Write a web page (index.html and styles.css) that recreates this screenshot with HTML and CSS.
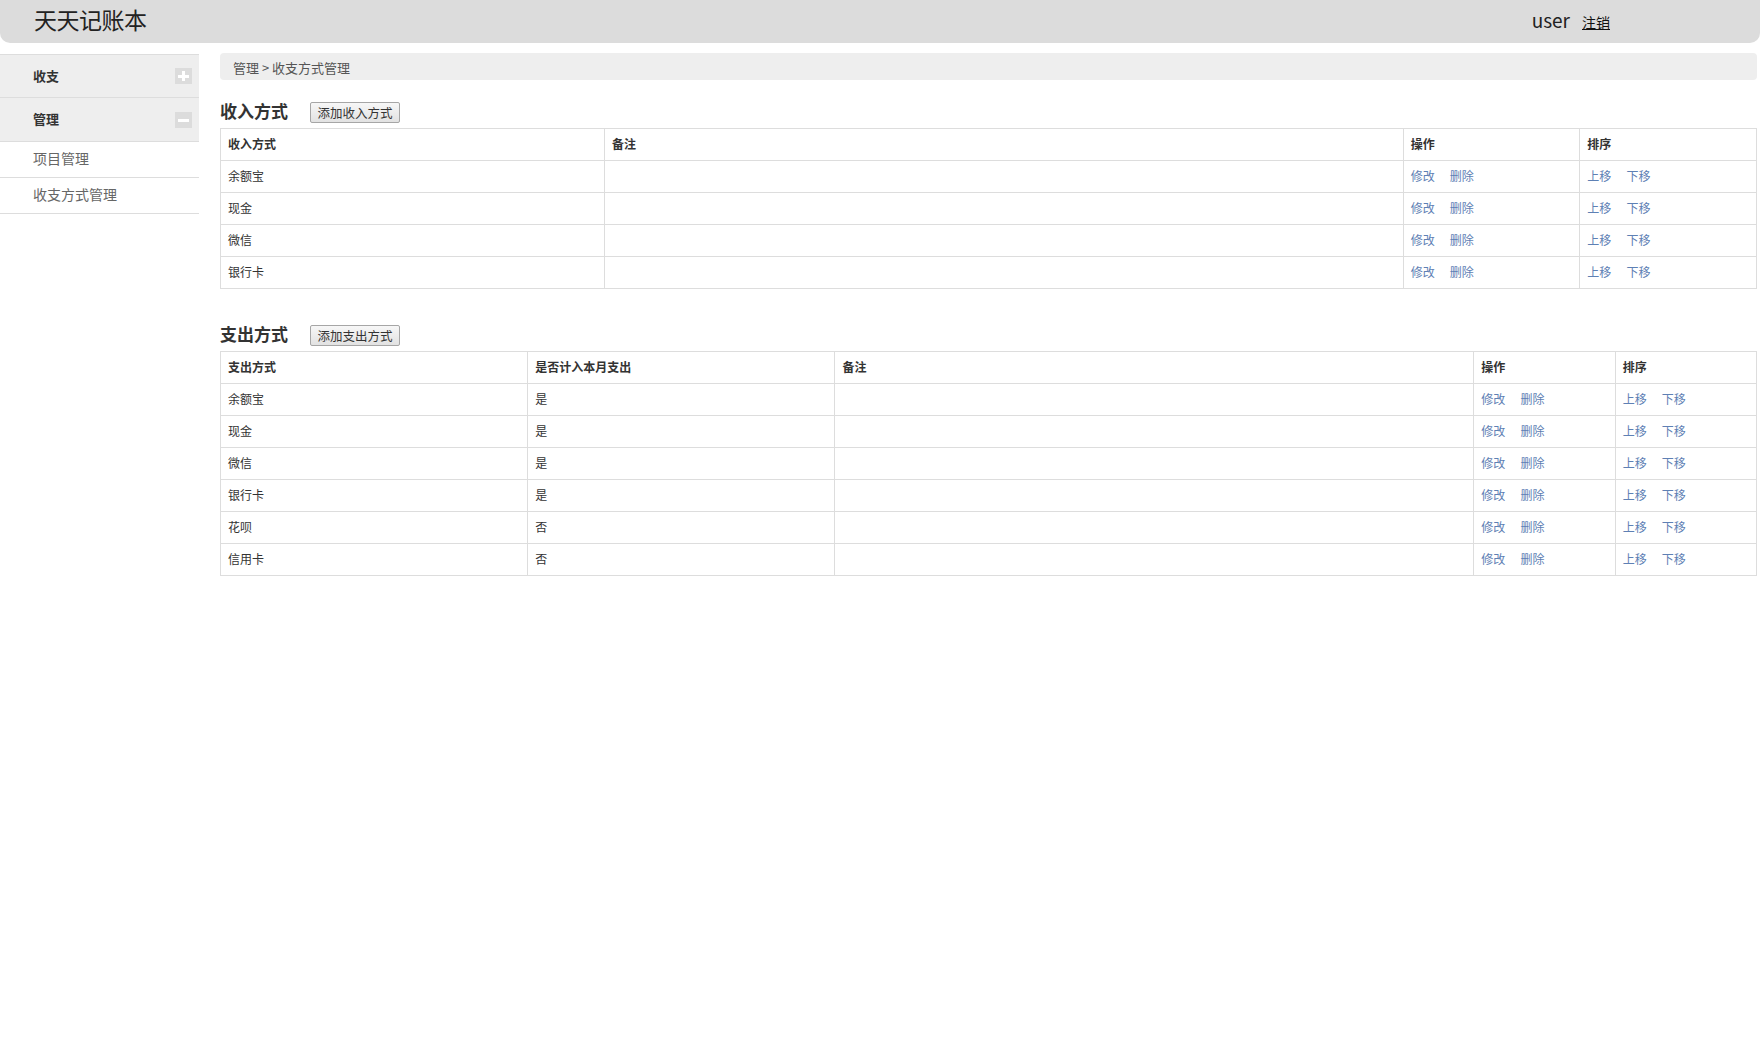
FILE: index.html
```html
<!DOCTYPE html>
<html lang="zh-CN">
<head>
<meta charset="utf-8">
<title>天天记账本</title>
<link rel="stylesheet" href="styles.css">
</head>
<body>
<header class="topbar">
  <div class="brand">天天记账本</div>
  <div class="userbox"><span class="username">user</span><a class="logout" href="#">注销</a></div>
</header>
<div class="main">
  <nav class="sidebar">
    <div class="group-head"><span>收支</span><span class="toggle plus"></span></div>
    <div class="group-head"><span>管理</span><span class="toggle minus"></span></div>
    <a class="sub-item" href="#">项目管理</a>
    <a class="sub-item" href="#">收支方式管理</a>
  </nav>
  <section class="content">
    <div class="crumb">管理 &gt; 收支方式管理</div>

    <div class="section-head first">
      <h2 class="section-title">收入方式</h2>
      <button class="add-btn">添加收入方式</button>
    </div>
    <table class="grid">
      <colgroup><col class="c25"><col class="c52"><col class="c115"><col class="c115"></colgroup>
      <thead><tr><th>收入方式</th><th>备注</th><th>操作</th><th>排序</th></tr></thead>
      <tbody>
        <tr><td>余额宝</td><td></td><td><a href="#">修改</a><a href="#">删除</a></td><td><a href="#">上移</a><a href="#">下移</a></td></tr>
        <tr><td>现金</td><td></td><td><a href="#">修改</a><a href="#">删除</a></td><td><a href="#">上移</a><a href="#">下移</a></td></tr>
        <tr><td>微信</td><td></td><td><a href="#">修改</a><a href="#">删除</a></td><td><a href="#">上移</a><a href="#">下移</a></td></tr>
        <tr><td>银行卡</td><td></td><td><a href="#">修改</a><a href="#">删除</a></td><td><a href="#">上移</a><a href="#">下移</a></td></tr>
      </tbody>
    </table>

    <div class="section-head second">
      <h2 class="section-title">支出方式</h2>
      <button class="add-btn">添加支出方式</button>
    </div>
    <table class="grid">
      <colgroup><col class="c20"><col class="c20"><col class="c416"><col class="c92"><col class="c92"></colgroup>
      <thead><tr><th>支出方式</th><th>是否计入本月支出</th><th>备注</th><th>操作</th><th>排序</th></tr></thead>
      <tbody>
        <tr><td>余额宝</td><td>是</td><td></td><td><a href="#">修改</a><a href="#">删除</a></td><td><a href="#">上移</a><a href="#">下移</a></td></tr>
        <tr><td>现金</td><td>是</td><td></td><td><a href="#">修改</a><a href="#">删除</a></td><td><a href="#">上移</a><a href="#">下移</a></td></tr>
        <tr><td>微信</td><td>是</td><td></td><td><a href="#">修改</a><a href="#">删除</a></td><td><a href="#">上移</a><a href="#">下移</a></td></tr>
        <tr><td>银行卡</td><td>是</td><td></td><td><a href="#">修改</a><a href="#">删除</a></td><td><a href="#">上移</a><a href="#">下移</a></td></tr>
        <tr><td>花呗</td><td>否</td><td></td><td><a href="#">修改</a><a href="#">删除</a></td><td><a href="#">上移</a><a href="#">下移</a></td></tr>
        <tr><td>信用卡</td><td>否</td><td></td><td><a href="#">修改</a><a href="#">删除</a></td><td><a href="#">上移</a><a href="#">下移</a></td></tr>
      </tbody>
    </table>
  </section>
</div>
</body>
</html>
```
FILE: styles.css
```css
* { box-sizing: border-box; }
html, body { margin: 0; padding: 0; background: #fff; }
body {
  font-family: "Noto Sans CJK SC", "Microsoft YaHei", sans-serif;
  color: #333;
  font-size: 12px;
}
a { text-decoration: none; }

.topbar {
  height: 43px;
  margin-right: 2px;
  background: #dcdcdc;
  border-radius: 0 0 10px 10px;
  display: flex;
  align-items: center;
  justify-content: space-between;
  padding: 0 150px 4px 34px;
}
.brand {
  font-size: 23px;
  color: #222;
  line-height: 1;
  letter-spacing: -0.5px;
}
.userbox { display: flex; align-items: baseline; }
.username { font-size: 19px; color: #222; }
.logout {
  margin-left: 12px;
  font-size: 14px;
  color: #111;
  text-decoration: underline;
}

.main {
  display: flex;
  margin-top: 10px;
  padding-right: 5px;
}
.sidebar {
  width: 199px;
  flex: none;
  margin-top: 1px;
  border-top: 1px solid #ddd;
  display: flex;
  flex-direction: column;
  align-self: flex-start;
}
.group-head {
  height: 43px;
  background: #eee;
  border-bottom: 1px solid #ddd;
  display: flex;
  align-items: center;
  justify-content: space-between;
  padding: 0 7px 0 33px;
  font-size: 13px;
  font-weight: bold;
  color: #333;
}
.group-head > span:first-child { padding-bottom: 2px; }
.group-head + .group-head { height: 44px; }
.toggle {
  width: 17px;
  height: 16px;
  background: #dcdcdc;
  position: relative;
}
.toggle::before, .toggle::after {
  content: "";
  position: absolute;
  background: #fff;
}
.toggle::before { left: 3px; right: 3px; top: 7px; height: 3px; }
.plus::after { top: 3px; bottom: 3px; left: 7px; width: 3px; }
.minus::after { display: none; }
.sub-item {
  height: 36px;
  border-bottom: 1px solid #ddd;
  display: flex;
  align-items: center;
  padding: 0 0 4px 33px;
  font-size: 14px;
  color: #666;
}

.content {
  flex: 1;
  margin-left: 21px;
  min-width: 0;
}
.crumb {
  height: 27px;
  background: #eee;
  border-radius: 4px;
  padding: 2px 0 0 13px;
  display: flex;
  align-items: center;
  font-size: 13px;
  color: #555;
}
.section-head {
  display: flex;
  align-items: center;
  height: 21px;
  margin-bottom: 5px;
}
.section-head.first { margin-top: 22px; }
.section-head.second { margin-top: 36px; }
.section-title {
  margin: 0 22px 0 0;
  padding-bottom: 5px;
  font-size: 17px;
  font-weight: bold;
  color: #333;
  line-height: 1;
}
.add-btn {
  height: 21px;
  width: 90px;
  padding: 0;
  font-family: inherit;
  font-size: 12.5px;
  color: #333;
  background: linear-gradient(#f7f7f7, #e2e2e2);
  border: 1px solid #a6a6a6;
  border-radius: 2px;
}

.grid {
  width: 100%;
  border-collapse: collapse;
  table-layout: fixed;
  border: 1px solid #ddd;
}
.grid th, .grid td {
  border: 1px solid #ddd;
  height: 32px;
  padding: 0 7px 3px;
  text-align: left;
  vertical-align: middle;
  font-size: 12px;
  color: #333;
  white-space: nowrap;
}
.grid th { font-weight: bold; }
.grid td a { color: #5e80b4; margin-right: 15px; }
.c25 { width: 25%; }
.c52 { width: 52%; }
.c115 { width: 11.5%; }
.c20 { width: 20%; }
.c416 { width: 41.6%; }
.c92 { width: 9.2%; }
```
